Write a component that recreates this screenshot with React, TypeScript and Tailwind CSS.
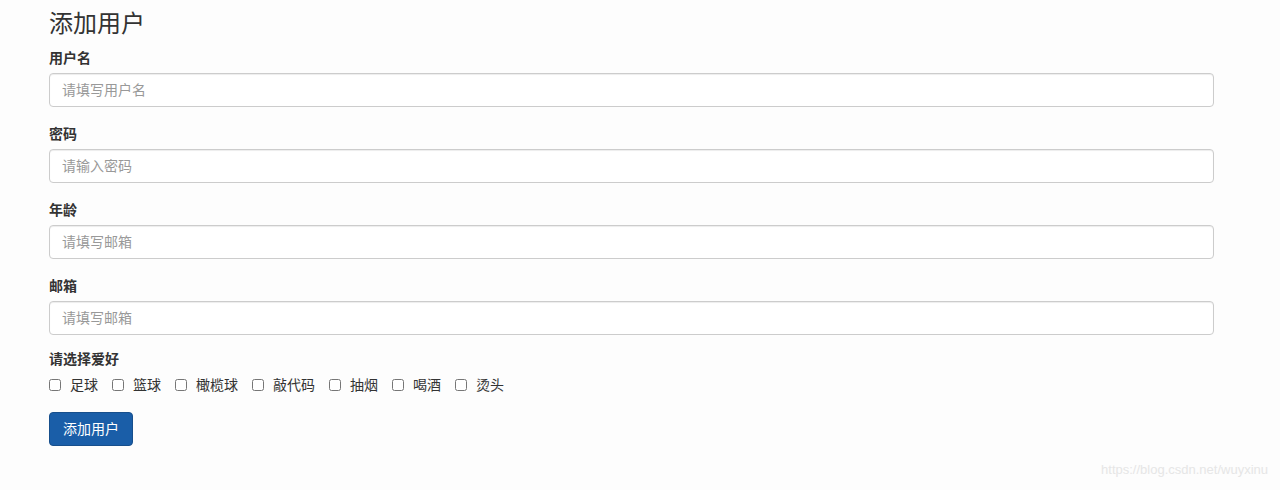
const fields = [
  { label: "用户名", placeholder: "请填写用户名", type: "text" },
  { label: "密码", placeholder: "请输入密码", type: "password" },
  { label: "年龄", placeholder: "请填写邮箱", type: "text" },
  { label: "邮箱", placeholder: "请填写邮箱", type: "text" },
];

const hobbies = ["足球", "篮球", "橄榄球", "敲代码", "抽烟", "喝酒", "烫头"];

export default function App() {
  return (
    <div
      className="relative min-h-[490px] bg-[#fdfdfd] text-[#333] pl-[49px] pt-[9px]"
      style={{ fontFamily: '"Liberation Sans", "Noto Sans CJK SC", sans-serif' }}
    >
      <h1 className="text-[24px] leading-[30px] font-normal mb-[9px]">添加用户</h1>
      <form className="w-[1165px] flex flex-col gap-[17px]">
        {fields.map((f) => (
          <div key={f.label}>
            <label className="block text-[14px] font-bold leading-[20px] mb-[5px]">{f.label}</label>
            <input
              type={f.type}
              placeholder={f.placeholder}
              className="block w-full h-[34px] rounded-[4px] border border-[#ccc] bg-white px-[12px] text-[14px] placeholder:text-[#999] shadow-[inset_0_1px_1px_rgba(0,0,0,0.075)] outline-none"
            />
          </div>
        ))}
        <div className="-mt-[3px]">
          <label className="block text-[14px] font-bold leading-[20px] mb-[6px]">请选择爱好</label>
          <div className="flex items-center gap-[14px] text-[14px] leading-[20px]">
            {hobbies.map((h) => (
              <label key={h} className="flex items-center gap-[9px]">
                <input type="checkbox" className="w-[12px] h-[12px] m-0" />
                <span>{h}</span>
              </label>
            ))}
          </div>
        </div>
        <div>
          <button
            type="button"
            className="h-[34px] w-[84px] rounded-[4px] bg-[#1a5ea8] text-white text-[14px] border border-[#174f8c]"
          >
            添加用户
          </button>
        </div>
      </form>
      <span className="absolute right-[12px] bottom-[11px] text-[13px] text-[#e6e6e6]">
        https://blog.csdn.net/wuyxinu
      </span>
    </div>
  );
}
